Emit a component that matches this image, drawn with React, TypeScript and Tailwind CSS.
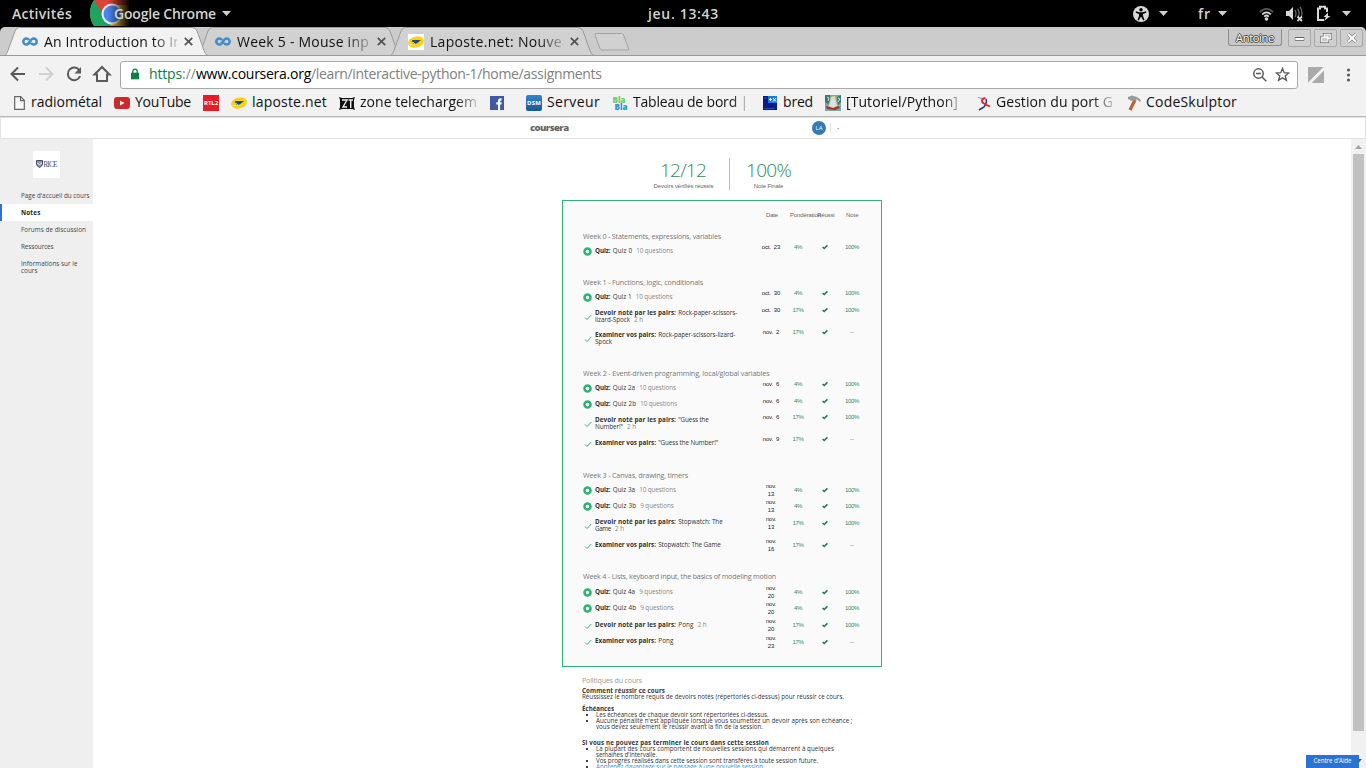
import { useLayoutEffect, useRef, useState } from "react";
import type { ReactNode } from "react";

/* Text that spreads its letters so the run takes a given width. */
function Fit({ w, children, className = "" }: { w: number; children: string; className?: string }) {
  const ref = useRef<HTMLSpanElement>(null);
  const [spacing, setSpacing] = useState(0);
  useLayoutEffect(() => {
    const el = ref.current;
    if (!el) return;
    const natural = el.getBoundingClientRect().width - spacing * children.length;
    setSpacing((w - natural) / children.length);
  }, [w, children]);
  return (
    <span ref={ref} className={`inline-block shrink-0 whitespace-pre ${className}`} style={{ letterSpacing: spacing }}>
      {children}
    </span>
  );
}

const Caret = () => (
  <svg width="9" height="5" viewBox="0 0 9 5" className="shrink-0"><path d="M0 0h9L4.500 5z" fill="#d0d0cc" /></svg>
);

function TopBar() {
  return (
    <header className="flex h-[27px] shrink-0 items-center bg-black text-[14px] font-semibold text-[#d3d3cf]">
      <div className="flex w-[90px] pl-3"><Fit w={60}>Activités</Fit></div>
      <div className="relative flex h-[27px] w-[558px] items-center pl-6">
        <svg className="absolute left-0 top-0" width="44" height="26" viewBox="0 0 44 26">
          <defs>
            <linearGradient id="fade" x1="0" x2="1"><stop offset="0" stopColor="#000" stopOpacity="0" /><stop offset="1" stopColor="#000" /></linearGradient>
            <clipPath id="disc"><circle cx="22" cy="13" r="22" /></clipPath>
          </defs>
          <g clipPath="url(#disc)">
            <path d="M0 0h44v26H0z" fill="#e8b820" />
            <path d="M0 0h5l8 13 8 13H0z" fill="#1da362" />
            <path d="M4 0h40v5H22l-9 10z" fill="#db4437" />
          </g>
          <circle cx="22" cy="14" r="10.500" fill="#eee" /><circle cx="22" cy="14" r="8.500" fill="#4a86ee" />
          <rect x="18" width="22" height="26" fill="url(#fade)" /><rect x="39" width="5" height="26" fill="#000" />
        </svg>
        <Fit w={102} className="relative">Google Chrome</Fit>
        <span className="w-[6px]" /><Caret />
      </div>
      <div className="w-[485px]"><Fit w={71}>jeu. 13:43</Fit></div>
      <div className="flex w-[65px] items-center gap-[10px]">
        <svg width="16" height="16" viewBox="0 0 16 16"><circle cx="8" cy="8" r="8" fill="#d8d8d4" /><circle cx="8" cy="3.800" r="1.700" fill="#000" /><path d="M2.800 5.300l3.500 1h3.400l3.500-1v1.400L10 8v2l1.500 4-1.200.4L8 10.600 5.700 14.400 4.500 14 6 10V8L2.800 6.700z" fill="#000" /></svg>
        <Caret />
      </div>
      <div className="flex w-[61px] items-center"><Fit w={13}>fr</Fit><span className="w-[7px]" /><Caret /></div>
      <div className="flex items-center">
        <svg width="15" height="14" viewBox="0 0 15 14" fill="none" strokeWidth="1.800"><path d="M1 5.200C4.500.8 10.500.8 14 5.200" stroke="#555" /><path d="M3.200 7.500c2.600-2.900 6-2.900 8.600 0" stroke="#d8d8d4" /><path d="M5.200 9.700c1.400-1.400 3.200-1.400 4.600 0" stroke="#d8d8d4" /><circle cx="7.500" cy="12" r="1.800" fill="#d8d8d4" /></svg>
        <span className="w-3" />
        <svg width="17" height="16" viewBox="0 0 17 16"><path d="M0 5h3l4-4v13l-4-4H0z" fill="#d8d8d4" /><path d="M9 4q2 3.500 0 7M11.500 2.500q3 5 .5 8M14 1q3 4 1.500 9" stroke="#666" fill="none" strokeWidth="1.300" /><path d="M11.500 10.500l4.500 4.500m0-4.500L11.500 15" stroke="#d8d8d4" strokeWidth="1.800" /></svg>
        <span className="w-[13px]" />
        <svg width="16" height="17" viewBox="0 0 16 17"><path d="M8 15H2V3.500h2V1.800h5v1.700h2V7" fill="none" stroke="#d8d8d4" strokeWidth="2" /><path d="M12 7.500L7.500 12H10l-2 4 6.500-5H12z" fill="#d8d8d4" /></svg>
        <span className="w-[10px]" /><Caret />
      </div>
    </header>
  );
}

const CourseraMark = () => (
  <svg width="16" height="9" viewBox="0 0 16 9"><path d="M7 3C6.200 1.800 5.400 1.400 4.400 1.400a3.100 3.100 0 000 6.200C8 7.600 8 1.400 11.600 1.400a3.100 3.100 0 010 6.200c-1 0-1.800-.4-2.600-1.600" fill="none" stroke="#428bca" strokeWidth="2.500" /></svg>
);
const Poste = () => (
  <svg width="16" height="16" viewBox="0 0 16 16"><ellipse cx="8" cy="8" rx="8" ry="5.500" transform="rotate(-14 8 8)" fill="#ffd014" /><path d="M4.500 6H13L9 9.300l-5 1.200L6.300 8.300 3.500 7.500z" fill="#174d86" /><path d="M1.500 11L7 9.700" stroke="#fff1a0" /></svg>
);
const Close = () => (
  <svg width="9" height="9" viewBox="0 0 8 8"><path d="M.7.700l6.600 6.600m0-6.600L.7 7.300" stroke="#555" strokeWidth="1.600" /></svg>
);

function Tab({ icon, title, w, active, wide, mask }: { icon: ReactNode; title: string; w: number; active?: boolean; wide: string; mask: string }) {
  return (
    <div className={`relative flex h-[29px] items-center ${wide}`}>
      <svg className="absolute -left-[3px] top-0" width="210" height="29" viewBox="0 0 210 29">
        <path d="M2.500 28.500C4 28 5 26 6 23.500L13 4Q14.500.500 17.500.500H190Q193.500.500 195 4l7 19.500c1 2.500 2 4.500 4 5" fill={active ? "#f2f2f2" : "#d1d1d1"} stroke="#999" />
      </svg>
      <div className="relative flex h-4 items-center pl-[17px]">
        <span className="flex w-[22px] items-center">{icon}</span>
        <span className={`w-[133px] overflow-hidden leading-5 ${mask}`}><Fit w={w}>{title}</Fit></span>
        <span className="ml-[7px]"><Close /></span>
      </div>
    </div>
  );
}

const fadeTab = "[mask-image:linear-gradient(to_right,black_82%,transparent_105%)]";

function TabStrip() {
  return (
    <div className="bg-black">
      <div className="relative flex h-[29px] shrink-0 overflow-hidden rounded-t-[5px] border-b border-[#999] bg-[#ccc] pl-[5px] text-[14px] text-[#111]">
        <div className="relative z-10 flex w-[193px]"><Tab active icon={<CourseraMark />} title="An Introduction to In" w={138} wide="w-[193px]" mask={fadeTab} /></div>
        <div className="flex w-[193px]"><Tab icon={<CourseraMark />} title="Week 5 - Mouse inp" w={132} wide="w-[193px]" mask={fadeTab} /></div>
        <div className="flex w-[200px]"><Tab icon={<span className="bg-white"><Poste /></span>} title="Laposte.net: Nouvea" w={140} wide="w-[200px]" mask={fadeTab} /></div>
        <svg className="mt-[6px] ml-[3px]" width="36" height="18" viewBox="0 0 36 18"><path d="M2 .5h25.500q1.500 0 2 1.500l5 13.500q.5 1.500-1 1.500H8q-1.500 0-2-1.500L1 2Q.500.500 2 .5z" fill="#d1d1d1" stroke="#a2a2a2" /></svg>
        <div className="ml-auto flex gap-[3px] pr-[3px]">
          <div className="mt-[2px] mr-[3px] flex h-[17px] w-[54px] items-center justify-center rounded-b-[3px] border border-t-0 border-[#8d8d8d] bg-[#c8c8c8] pt-[2px] text-[11px] text-white [text-shadow:1px_0_#444,-1px_0_#444,0_1px_#444,0_-1px_#444]"><Fit w={38}>Antoine</Fit></div>
          <WinButton><path d="M6 9.500h10" stroke="#666" strokeWidth="4" /><path d="M6.500 9.500h9" stroke="#fff" strokeWidth="2" /></WinButton>
          <WinButton><path d="M9.500 4.500h7v5h-7zM6.500 7.500h7v5h-7z" fill="#ccc" stroke="#777" strokeWidth="2.500" /><path d="M9.500 4.500h7v5h-3v-2h-4zM6.500 7.500h7v5h-7z" fill="#ccc" stroke="#fff" /></WinButton>
          <WinButton><path d="M7.500 4.500l8 8m0-8l-8 8" stroke="#777" strokeWidth="3.400" /><path d="M7.500 4.500l8 8m0-8l-8 8" stroke="#fff" strokeWidth="2" /></WinButton>
        </div>
      </div>
    </div>
  );
}
function WinButton({ children }: { children: ReactNode }) {
  return <div className="mt-[2px] h-[18px] w-[23px] rounded-[2px] border border-[#a8a8a8] bg-[#cfcfcf]"><svg width="22" height="16" viewBox="0 0 23 17" fill="none">{children}</svg></div>;
}

function Toolbar() {
  return (
    <div className="flex h-[37px] shrink-0 items-center bg-[#f2f2f2] text-[14px]">
      <svg width="120" height="37" viewBox="0 0 120 37" fill="none" stroke="#5a5a5a" strokeWidth="2">
        <path d="M25 18H12.500M18 11.500L11.500 18l6.500 6.500" />
        <path d="M39 18h12.500M46 11.500l6.500 6.500-6.500 6.500" stroke="#d0d0d0" />
        <path d="M79.500 14.500a6.300 6.300 0 10.600 5.500" /><path d="M81 11v6.500h-6.500z" fill="#5a5a5a" stroke="none" />
        <path d="M94.500 18.500L102 11l7.500 7.500H107v6.500H97v-6.500z" />
      </svg>
      <div className="flex h-[28px] w-[1178px] items-center rounded-[3px] border border-[#a9a9a9] bg-white">
        <svg className="mr-[11px] ml-[10px] -mt-px" width="8" height="12" viewBox="0 0 9 12"><path d="M0 4.500h9V12H0z" fill="#0b8043" /><path d="M2 5V3a2.500 2.500 0 015 0v2" stroke="#0b8043" strokeWidth="1.400" fill="none" /></svg>
        <div className="-mt-[2px] ml-[-1px] flex flex-1"><Fit w={33} className="text-[#0b8043]">https</Fit><Fit w={14} className="text-[#888]">://</Fit><Fit w={115} className="text-black">www.coursera.org</Fit><Fit w={290.500} className="text-[#808080]">/learn/interactive-python-1/home/assignments</Fit></div>
        <svg className="mr-[8px]" width="14" height="14" viewBox="0 0 14 14" fill="none" stroke="#5a5a5a" strokeWidth="1.500"><circle cx="5.500" cy="5.500" r="4.700" /><path d="M9 9l4.300 4.300M3 5.500h5" /></svg>
        <svg className="mr-[7px]" width="15" height="15" viewBox="0 0 15 15" fill="none" stroke="#5a5a5a" strokeWidth="1.400"><path d="M7.500 1.500l1.700 4.200 4.500.3-3.500 2.900 1.200 4.400-3.900-2.400-3.900 2.400 1.200-4.400L1.300 6l4.500-.3z" /></svg>
      </div>
      <svg className="ml-[10px]" width="16" height="16" viewBox="0 0 16 16"><path d="M0 0h16v16H0z" fill="#aaa" /><path d="M1 16.500L16.500 1" stroke="#f2f2f2" strokeWidth="3" /></svg>
      <svg className="ml-[22px]" width="5" height="14" viewBox="0 0 5 14" fill="#5a5a5a"><circle cx="2.500" cy="2" r="1.600" /><circle cx="2.500" cy="7" r="1.600" /><circle cx="2.500" cy="12" r="1.600" /></svg>
    </div>
  );
}

function Bookmark({ icon, text, w, wide, mask = "" }: { icon: ReactNode; text?: string; w?: number; wide: string; mask?: string }) {
  return (
    <div className={`flex h-[18px] shrink-0 items-center ${wide}`}>
      <span className="mt-[2px] mr-[5px] flex h-4 w-4 shrink-0 items-center justify-center">{icon}</span>
      {text && <span className={mask}><Fit w={w ?? 0}>{text}</Fit></span>}
    </div>
  );
}

const fadeMark = "[mask-image:linear-gradient(to_right,black_82%,transparent_105%)]";

function Bookmarks() {
  return (
    <div className="flex h-6 shrink-0 items-start border-b border-[#b6b6b6] bg-[#f2f2f2] pl-3 text-[14px] leading-[18px] text-[#111]">
      <Bookmark wide="w-[102px] [&>span:first-child]:mr-[3px]" w={71} text="radiométal" icon={<svg className="-ml-px" width="11" height="14" viewBox="0 0 11 14"><path d="M.7.700h6l3.600 3.600v9H.7zM6.500.700v4h4" fill="#fafafa" stroke="#666" strokeWidth="1.200" /></svg>} />
      <Bookmark wide="w-[89px]" w={56} text="YouTube" icon={<svg width="16" height="12" viewBox="0 0 16 12"><rect width="16" height="12" rx="3" fill="#cc2a2a" /><path d="M6 3.500v5L10.500 6z" fill="#fff" /></svg>} />
      <Bookmark wide="w-[28px]" icon={<span className="flex h-4 w-4 items-center justify-center bg-[#e81c23] text-[6px] font-bold text-white"><Fit w={14}>RTL2</Fit></span>} />
      <Bookmark wide="w-[108px]" w={75} text="laposte.net" icon={<Poste />} />
      <Bookmark wide="w-[150px]" w={117} text="zone telechargem" mask={fadeMark} icon={<svg width="16" height="15" viewBox="0 0 16 15"><path d="M0 1l3 1h10l3-1-1 3v7l1 3-3-1H3l-3 1 1-3V4z" fill="#111" /><path d="M3 4h5L4 11h4M9.500 4H14M11.700 4v8" stroke="#f2f2f2" strokeWidth="1.400" fill="none" /></svg>} />
      <Bookmark wide="w-[37px]" icon={<svg width="14" height="14" viewBox="0 0 14 14"><path d="M0 0h14v14H0z" fill="#4059a0" /><path d="M8 14V8.500H6.300V6.300H8V5c0-2 1-2.800 3.600-2.600v2.200c-1.200 0-1.500.1-1.500.9v.8h1.600l-.3 2.200h-1.300V14z" fill="#fff" /></svg>} />
      <Bookmark wide="w-[86px]" w={53} text="Serveur" icon={<span className="flex h-4 w-4 items-center justify-center rounded-[2px] bg-linear-to-b from-[#3484c8] to-[#195898] text-[6px] font-bold text-white"><Fit w={14}>DSM</Fit></span>} />
      <Bookmark wide="w-[150px]" w={115} text="Tableau de bord |" mask="[mask-image:linear-gradient(to_right,black_86%,#0003_100%)]" icon={<span className="flex flex-col text-[8px] leading-[7.5px] font-extrabold"><span className="text-[#70cc60]"><Fit w={13}>Bla</Fit></span><span className="pl-[2px] text-[#2f94d5]"><Fit w={13}>Bla</Fit></span></span>} />
      <Bookmark wide="w-[63px]" w={30} text="bred" icon={<svg width="14" height="14" viewBox="0 0 14 14"><path d="M0 0h14v14H0z" fill="#0b1c86" /><path d="M5 0h9v7H5z" fill="#187be5" /><path d="M6 3.500h3M7.500 2v3M10 2l3 3.500M13 2l-3 3.500" stroke="#fff" /><path d="M1 2h3M1 12.500h11" stroke="#2c49b2" /></svg>} />
      <Bookmark wide="w-[151px]" w={112} text="[Tutoriel/Python]" mask="[mask-image:linear-gradient(to_right,black_86%,#0005_100%)]" icon={<svg width="16" height="16" viewBox="0 0 16 16"><path d="M0 0h16v16H0z" fill="#79aaa2" /><path d="M0 0h5v5L3 9 0 7zM12 2l4-2v7l-3 3z" fill="#3c7774" /><path d="M2 2l2 1-1 3M13 3l2 1-2 3" stroke="#d8e7dd" fill="none" /><path d="M6 2l4-1 1 5 2 7H3l2-6z" fill="#eed9a1" /><path d="M5 7l3-3 3 4-1 3H6z" fill="#d0e7f2" /><path d="M1 11l4 1 3 1 5-2 2 2-5 2-8-1z" fill="#a52e35" /></svg>} />
      <Bookmark wide="w-[150px] [&>span:first-child]:mr-[4px]" w={117} text="Gestion du port G" mask={fadeMark} icon={<svg width="14" height="15" viewBox="0 0 14 15" fill="none"><path d="M1 1.500L6 2.500" stroke="#8a8fc8" strokeWidth="1.200" /><path d="M9 3q1.500 4-2 8l-5 3" stroke="#29308a" strokeWidth="1.500" /><path d="M8.500 2Q3.500 3 5.500 6.500l3 2 4.500 2" stroke="#e32228" strokeWidth="1.900" /></svg>} />
      <Bookmark wide="w-[150px] [&>span:first-child]:mr-[4px]" w={91} text="CodeSkulptor" icon={<svg width="15" height="16" viewBox="0 0 15 16"><path d="M8 5L3 15" stroke="#bf622c" strokeWidth="3.200" /><path d="M1 2l4-1.500 5 1.500 4 3-1 2-3-2.500-5 1.500L1 4z" fill="#999c9d" /></svg>} />
    </div>
  );
}

function Sidebar() {
  return (
    <nav className="w-[93px] shrink-0 bg-[#efefef] pt-3 text-[6.300px] leading-[7px] text-[#444]">
      <div className="ml-[33px] flex h-[27px] w-[27px] items-center justify-center bg-white pb-px">
        <svg className="shrink-0" width="7" height="8" viewBox="0 0 7 8"><path d="M.5.500h6v3.500Q6 6.500 3.500 7.500.500 6 .5 4z" fill="#8b95a3" stroke="#42506a" /><path d="M1 3l2.500 1.500L6 3" stroke="#eee" fill="none" /></svg>
        <Fit w={13.500} className="font-['Liberation_Serif'] text-[7.500px] text-[#3f5690]">RICE</Fit>
      </div>
      <div className="mt-[9px] flex h-[17px] items-center pl-[21px]"><Fit w={68.500}>Page d'accueil du cours</Fit></div>
      <div className="flex h-[17px] items-center border-l-2 border-[#2a73d2] bg-white pl-[19px] font-bold text-[#222]"><Fit w={19.500}>Notes</Fit></div>
      <div className="flex h-[17px] items-center pl-[21px]"><Fit w={65}>Forums de discussion</Fit></div>
      <div className="flex h-[17px] items-center pl-[21px]"><Fit w={32.500}>Ressources</Fit></div>
      <div className="flex flex-col items-start pt-[5px] pl-[21px]"><Fit w={56.500}>Informations sur le</Fit><Fit w={16.500}>cours</Fit></div>
    </nav>
  );
}

type Item = {
  quiz?: boolean; kind: string; kw: number; name: string; nw: number; rest?: string; rw?: number; meta?: string; mw?: number;
  date: string; day?: string; pct: string; score: string; h: string; shift?: string;
};
const D = { kind: "Devoir noté par les pairs:", kw: 81, meta: "2 h", mw: 9, pct: "17%", score: "100%" };
const E = { kind: "Examiner vos pairs:", kw: 61, pct: "17%", score: "--" };
const Q = { quiz: true, kind: "Quiz:", kw: 15.5, pct: "4%", score: "100%" };
const q10 = { meta: "10 questions", mw: 36.7 };
const q9 = { meta: "9 questions", mw: 33.5 };

const weeks: { title: string; w: number; head: string; items: Item[] }[] = [
  { title: "Week 0 - Statements, expressions, variables", w: 138, head: "h-[13px] pb-[2px]", items: [
    { ...Q, ...q10, name: "Quiz 0", nw: 19.5, date: "oct.  23", h: "h-[33px]" } ] },
  { title: "Week 1 - Functions, logic, conditionals", w: 120, head: "h-[13px] pb-[2px]", items: [
    { ...Q, ...q10, name: "Quiz 1", nw: 19, date: "oct.  30", h: "h-[16px]" },
    { ...D, name: "Rock-paper-scissors-", nw: 59, rest: "lizard-Spock", rw: 35, date: "oct.  30", h: "h-[22px]", shift: "pt-px" },
    { ...E, name: "Rock-paper-scissors-lizard-", nw: 77, rest: "Spock", rw: 17, date: "nov.  2", h: "h-[40px]", shift: "pt-px" } ] },
  { title: "Week 2 - Event-driven programming, local/global variables", w: 186.5, head: "h-[13px] pb-[2px]", items: [
    { ...Q, ...q10, name: "Quiz 2a", nw: 22.5, date: "nov.  6", h: "h-[16px]" },
    { ...Q, ...q10, name: "Quiz 2b", nw: 23.5, date: "nov.  6", h: "h-[16px]", shift: "pt-px" },
    { ...D, name: "\"Guess the", nw: 30.5, rest: "Number!\"", rw: 28, date: "nov.  6", h: "h-[23px]", shift: "pt-px" },
    { ...E, name: "\"Guess the Number!\"", nw: 60, date: "nov.  9", h: "h-[34px]" } ] },
  { title: "Week 3 - Canvas, drawing, timers", w: 105, head: "h-[13px] pb-[2px]", items: [
    { ...Q, ...q10, name: "Quiz 3a", nw: 22.5, date: "nov.", day: "13", h: "h-[16px]" },
    { ...Q, ...q9, name: "Quiz 3b", nw: 23.5, date: "nov.", day: "13", h: "h-[16px]" },
    { ...D, name: "Stopwatch: The", nw: 44.5, rest: "Game", rw: 16, date: "nov.", day: "13", h: "h-[23px]", shift: "pt-px" },
    { ...E, name: "Stopwatch: The Game", nw: 62.5, date: "nov.", day: "16", h: "h-[33px]" } ] },
  { title: "Week 4 - Lists, keyboard input, the basics of modeling motion", w: 193, head: "h-[14px] pb-[3px]", items: [
    { ...Q, ...q9, name: "Quiz 4a", nw: 22.5, date: "nov.", day: "20", h: "h-[16px]" },
    { ...Q, ...q9, name: "Quiz 4b", nw: 23.5, date: "nov.", day: "20", h: "h-[17px]" },
    { ...D, name: "Pong", nw: 15.5, date: "nov.", day: "20", h: "h-[16px]" },
    { ...E, name: "Pong", nw: 15.5, date: "nov.", day: "23", h: "h-[33px]", shift: "pt-px" } ] },
];

function ItemRow({ item }: { item: Item }) {
  const meta = item.meta ? <Fit w={item.mw ?? 0} className="ml-1 text-[#888]">{item.meta}</Fit> : null;
  return (
    <div className={`flex items-start ${item.h}`}>
      <div className="flex w-[178px] items-center pt-[4px]">
        <span className="-mt-[3px] -mb-[5px] mr-[3px] flex w-[9px] justify-center">
          {item.quiz
            ? <svg className="-ml-px" width="9" height="9" viewBox="0 0 9 9"><circle cx="4.500" cy="4.500" r="3" fill="#fff" stroke="#2ab573" strokeWidth="2.600" /></svg>
            : <svg width="8" height="8" viewBox="0 0 8 8"><path d="M1 4.500l2 2L7.300 2" fill="none" stroke="#2ab573" strokeWidth="1" /></svg>}
        </span>
        <div className="flex flex-col text-[6.300px] leading-[7px] text-[#333]">
          <div className="flex h-[7px]"><Fit w={item.kw} className="mr-[2.2px] font-bold">{item.kind}</Fit><Fit w={item.nw}>{item.name}</Fit>{!item.rest && meta}</div>
          {item.rest && <div className="flex h-[7px]"><Fit w={item.rw ?? 0}>{item.rest}</Fit>{meta}</div>}
        </div>
      </div>
      <div className={`flex items-center font-['Liberation_Sans'] text-[6px] leading-[8px] text-[#2b8c5e] ${item.shift ?? ""}`}>
        <div className="flex w-5 flex-col items-center text-[#222]">
          <Fit w={item.day ? 10 : item.date.startsWith("o") ? 18.5 : 16.5}>{item.date}</Fit>
          {item.day && <Fit w={6.5}>{item.day}</Fit>}
        </div>
        <div className="flex w-[34px] justify-center"><Fit w={item.pct === "4%" ? 8 : 11}>{item.pct}</Fit></div>
        <div className="flex w-5 justify-center"><svg width="6" height="6" viewBox="0 0 6 6"><path d="M.6 3l1.600 1.500L5.400 1.400" fill="none" stroke="#1f7a4d" strokeWidth="1.600" /></svg></div>
        <div className="flex w-[34px] justify-center">{item.score === "--" ? <Fit w={4} className="text-[#666]">--</Fit> : <Fit w={14}>{item.score}</Fit>}</div>
      </div>
    </div>
  );
}

function Policies() {
  const li = "flex flex-col items-start pl-[14px] relative before:absolute before:left-[4px] before:top-[2px] before:h-[2px] before:w-[2px] before:bg-[#444]";
  return (
    <section className="flex w-[320px] flex-col items-start pt-[9px] pl-5 text-[6.200px] leading-[6px] text-[#333]">
      <div className="flex h-[12px] items-start text-[7px] leading-[9px] text-[#999]"><Fit w={60}>Politiques du cours</Fit></div>
      <div className="flex flex-col items-start font-normal">
        <Fit w={83} className="font-bold">Comment réussir ce cours</Fit>
        <Fit w={262}>Réussissez le nombre requis de devoirs notés (répertoriés ci-dessus) pour réussir ce cours.</Fit>
      </div>
      <div className="mt-[6px] flex flex-col items-start">
        <Fit w={32} className="font-bold">Échéances</Fit>
        <div className={li}><Fit w={172.500}>Les échéances de chaque devoir sont répertoriées ci-dessus.</Fit></div>
        <div className={li}><Fit w={256.500}>Aucune pénalité n'est appliquée lorsque vous soumettez un devoir après son échéance ;</Fit><Fit w={167}>vous devez seulement le réussir avant la fin de la session.</Fit></div>
      </div>
      <div className="mt-[10px] flex flex-col items-start">
        <Fit w={187} className="font-bold">Si vous ne pouvez pas terminer le cours dans cette session</Fit>
        <div className={li}><Fit w={238}>La plupart des cours comportent de nouvelles sessions qui démarrent à quelques</Fit><Fit w={61}>semaines d'intervalle.</Fit></div>
        <div className={li}><Fit w={222}>Vos progrès réalisés dans cette session sont transférés à toute session future.</Fit></div>
        <div className={li}><Fit w={168.500} className="text-[#4191d0]">Apprenez davantage sur le passage à une nouvelle session.</Fit></div>
      </div>
    </section>
  );
}

export default function App() {
  return (
    <div className="relative flex h-[768px] w-[1366px] flex-col overflow-hidden bg-white font-['Open_Sans','Noto_Sans',sans-serif]">
      <TopBar />
      <TabStrip />
      <Toolbar />
      <Bookmarks />
      <div className="flex h-[22px] shrink-0 items-center border border-[#e2e2e2] bg-white">
        <div className="box-content flex h-[20px] w-[282px] pl-[529px]"><Fit w={38.500} className="mt-px h-[18px] text-[9.500px] leading-[18px] font-extrabold text-[#666]">coursera</Fit></div>
        <span className="flex h-[14px] w-[14px] items-center justify-center rounded-full bg-[#337ab7] text-[6px] text-white"><Fit w={7}>LA</Fit></span>
        <span className="ml-[4px] h-[10px] w-px bg-[#ddd]" />
        <span className="ml-[6px] text-[7px] text-[#666]">-</span>
      </div>
      <div className="flex min-h-0 flex-1">
        <Sidebar />
        <main className="flex min-w-0 flex-1 flex-col overflow-hidden pl-[469px]">
          <div className="flex h-[61px] shrink-0 pt-[19px]">
            <div className="flex h-8 w-[168px] flex-col items-end border-r border-[#bbb] pr-[15.5px]">
              <div className="flex w-[61px] justify-center text-[19px] leading-[24px] font-light text-[#2b8c5e]"><Fit w={46}>12/12</Fit></div>
              <div className="font-['Liberation_Sans'] text-[6px] leading-[8px] text-[#666]"><Fit w={60}>Devoirs vérifiés réussis</Fit></div>
            </div>
            <div className="flex w-[77px] flex-col items-center">
              <div className="text-[19px] leading-[24px] font-light text-[#2b8c5e]"><Fit w={45}>100%</Fit></div>
              <div className="flex font-['Liberation_Sans'] text-[6px] leading-[8px] text-[#666]"><Fit w={29.5}>Note Finale</Fit></div>
            </div>
          </div>
          <section className="h-[467px] w-[320px] shrink-0 border border-[#2ab573] bg-[#fafafa] pl-5">
            <div className="flex h-[29px] items-center pl-[178px] font-['Liberation_Sans'] text-[6px] text-[#666]">
              <div className="flex w-[29px] pl-[5px]"><Fit w={12}>Date</Fit></div>
              <div className="w-[27px]"><Fit w={31}>Pondération</Fit></div>
              <div className="w-[29px]"><Fit w={17.5}>Réussi</Fit></div>
              <Fit w={12.5}>Note</Fit>
            </div>
            {weeks.map((week) => (
              <div key={week.title}>
                <div className={`flex items-center text-[7.200px] leading-[10px] text-[#777] ${week.head}`}><Fit w={week.w}>{week.title}</Fit></div>
                {week.items.map((item) => <ItemRow key={item.kind + item.name} item={item} />)}
              </div>
            ))}
          </section>
          <Policies />
        </main>
        <div className="flex w-[15px] shrink-0 flex-col items-center bg-[#f1f1f1]">
          <svg className="shrink-0" width="15" height="15" viewBox="0 0 15 15"><path d="M4 10l3.500-4 3.500 4z" fill="#a3a3a3" /></svg>
          <div className="h-[577px] w-[11px] bg-[#c1c1c1]" />
          <svg className="mt-auto" width="15" height="11" viewBox="0 0 15 11"><path d="M4 2h7L7.500 6z" fill="#505050" /></svg>
        </div>
      </div>
      <div className="absolute right-[7px] bottom-0 flex h-[13px] w-[53px] items-center justify-center bg-[#2a73d2] pb-[2px] text-[6.200px] text-white"><Fit w={38}>Centre d'Aide</Fit></div>
    </div>
  );
}
